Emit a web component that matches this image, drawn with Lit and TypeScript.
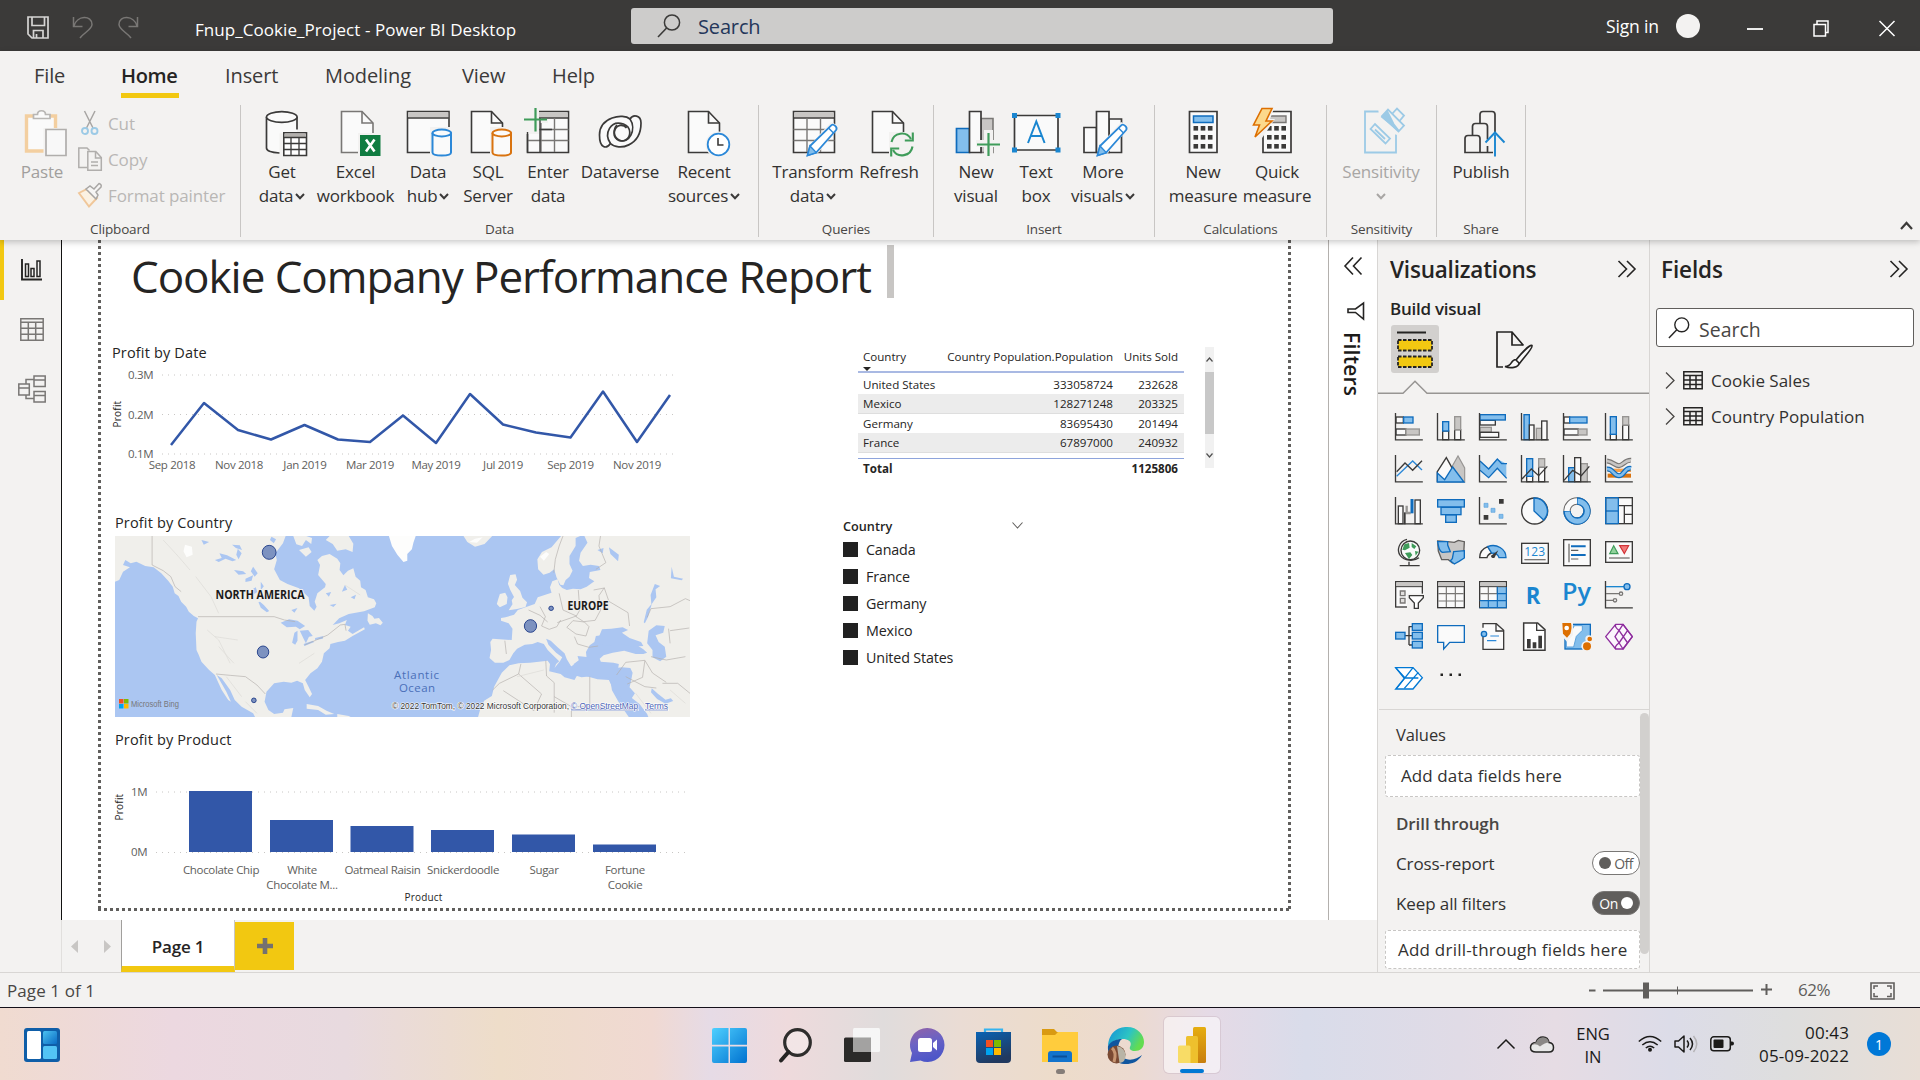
import { LitElement, html, svg, css, TemplateResult, SVGTemplateResult } from "lit";
import { customElement } from "lit/decorators.js";
import { classMap } from "lit/directives/class-map.js";

const base = css`
  * { box-sizing: border-box; }
  :host {
    display: block;
    font-family: "Open Sans", "Noto Sans", sans-serif;
    color: #252423;
    white-space: nowrap;
  }
  svg { display: block; overflow: visible; flex: none; fill: none; }
`;

const INK = "#3b3a39";
const GRAY = "#979593";
const BLUE = "#0f6cbd";
const SKY = "#83beec";
const PAPER = "#fafafa";

/* ---------- shared glyphs ---------- */

const chevDown = (c = INK, w = 2) =>
  html`<svg width="10" height="7" viewBox="0 0 10 7"><path d="M1 1l4 4.2L9 1" stroke=${c} stroke-width=${w}/></svg>`;

const magnifier = (w: number, c: string) =>
  html`<svg width=${w} height=${w} viewBox="0 0 24 24"><circle cx="15" cy="8.5" r="7.6" stroke=${c} stroke-width="1.5"/><path d="M9.6 14L1 23" stroke=${c} stroke-width="1.6"/></svg>`;

const dblChevron = (dir: "l" | "r") => html`<svg width="20" height="18" viewBox="0 0 20 18">
  <path d=${dir === "r" ? "M1.5 1l8 8-8 8M10 1l8 8-8 8" : "M10 0.5L2 9l8 8.5M18.500.5L10.500 9l8 8.500"} stroke="#252423" stroke-width="1.6"/></svg>`;

const page = (x: number) =>
  svg`<path d="M${x} 3.500h20l11 11.500v29.500h-31z" fill=${PAPER} stroke=${INK} stroke-width="1.600"/>
      <path d="M${x + 20} 3.500v11.500h11" stroke=${INK} stroke-width="1.600"/>`;

const cylinder = (c: string) =>
  svg`<path d="M26 19h24v31h-24z" fill="#f3f2f1"/>
      <path d="M28.500 25v19.500c0 4 18.500 4 18.500 0v-19.500" fill=${PAPER} stroke=${c} stroke-width="2"/>
      <ellipse cx="37.800" cy="25" rx="9.300" ry="3.400" fill=${PAPER} stroke=${c} stroke-width="2"/>`;

const table = (x: number) =>
  svg`<path d="M${x} 3.500h41v41h-41z" fill=${PAPER} stroke=${INK} stroke-width="1.600"/>
      <path d="M${x + 1} 4.500h39v5h-39z" fill="#c8c6c4"/>
      <path d="M${x} 10h41" stroke=${INK} stroke-width="1.400"/>
      <path d="M${x} 21.500h41M${x} 32.500h41M${x + 13.5} 10v34M${x + 27} 10v34" stroke="#797775" stroke-width="1.400"/>`;

const pencil = (dx: number) =>
  svg`<g transform="translate(${dx} 0)">
      <path d="M18 49l4-13L42 14l6 3v5L29 45z" fill="#f3f2f1"/>
      <path d="M18.500 47.500l2.500-9.500L42.500 17.200c1.800-1.700 6.500 2 4.600 4.800L27 44.800z" fill="#fff" stroke="#2b88d8" stroke-width="1.800"/>
      <path d="M18.500 47.500l2.500-9.500 6.300 6.600z" fill=${SKY} stroke="#2b88d8" stroke-width="1.400"/>
      <path d="M39.500 20l5 5" stroke="#2b88d8" stroke-width="1.400"/></g>`;

const keys = (x: number) =>
  [0, 1, 2].map((r) => [0, 1, 2].map((c) => svg`<rect x=${x + c * 7.2} y=${18 + r * 9} width="4.600" height="4.600" fill=${INK}/>`));

const ribbonArt: Record<string, SVGTemplateResult> = {
  get: svg`<path d="M8.500 9v31c0 3 6 4.800 13 5.200v-20h17.500v-16" fill=${PAPER}/>
    <path d="M8.500 9v31c0 2.800 5.500 4.500 13 5M39 9v12.500" stroke=${INK} stroke-width="1.700"/>
    <ellipse cx="23.800" cy="9" rx="15.300" ry="5.300" fill=${PAPER} stroke=${INK} stroke-width="1.700"/>
    <path d="M25.800 24.800h22.700v22.700h-22.700z" fill="#fff" stroke=${INK} stroke-width="1.600"/><path d="M26.600 25.600h21v3.500h-21z" fill="#b3b0ad"/>
    <path d="M26 29.500h22.500M26 35.500h22.500M26 41.500h22.500M33 29.500v18M41 29.500v18" stroke=${INK} stroke-width="1.300"/>`,
  excel: svg`<path d="M9.500 3.500h20.500l11 11.500v29.500h-31.500z" fill=${PAPER} stroke="#797775" stroke-width="1.600"/><path d="M30 3.500v11.500h11" stroke="#797775" stroke-width="1.600"/>
    <path d="M26 25h24v25h-24z" fill="#f3f2f1"/><path d="M28 27h20.500v21h-20.500z" fill="#107c41"/><path d="M34 31.500l8.500 12M42.500 31.500l-8.500 12" stroke="#fff" stroke-width="2.600"/>`,
  hub: svg`<path d="M3.500 3.500h41.500v41h-41.500z" fill=${PAPER} stroke=${INK} stroke-width="1.600"/><path d="M4.300 4.300h40v5h-40z" fill="#c8c6c4"/><path d="M3.500 10h41" stroke=${INK} stroke-width="1.400"/>${cylinder("#2b88d8")}`,
  sql: svg`${page(7.5)}${cylinder("#d9730f")}`,
  enter: svg`${table(3.5)}<path d="M-1 -2h16v13h9v4h-9v11h-16z" fill="#f3f2f1"/><path d="M3.500 24v20.500M16 21.500h12M16 10v34" stroke=${INK} stroke-width="1.400"/><path d="M0 11.500h23M11.500 0v23.500" stroke="#3f9c5a" stroke-width="2.200"/>`,
  dataverse: svg`<g stroke=${INK} stroke-width="1.700"><path d="M45 15c0-8-8-9-11-4C27 5 3.500 9 3.500 27c0 14 7 14 11 8.500 8 8 30.500 2.500 30.500-20.500z" fill=${PAPER}/>
    <path d="M14.500 35.500c-7-10 0-24 13-19.500 8 3 8 13 2 16-6 3-13-2-11-9s9-7 12-3"/><path d="M34 11c7 10-1 26-11 21-6-3-6-11-2-15"/></g>`,
  recent: svg`${page(8.5)}<circle cx="38.500" cy="36.500" r="13" fill="#f3f2f1"/><circle cx="38.500" cy="36.500" r="10.800" fill="#fff" stroke="#2b88d8" stroke-width="1.800"/><path d="M38 30v7h5.500" stroke=${INK} stroke-width="1.600"/>`,
  transform: svg`${table(4.5)}${pencil(0)}`,
  refresh: svg`${page(7.5)}<path d="M24 24h26v26h-26z" fill="#f3f2f1"/><g stroke="#3f9c5a" stroke-width="2.100"><path d="M26.500 34a10.500 10.500 0 0 1 19.500-3M47.500 38.500a10.500 10.500 0 0 1-19.500 3.500"/><path d="M47.800 24.500v8h-8M26.200 48.500v-8h8"/></g>`,
  visual: svg`<path d="M4.500 20.500h13v24h-13z" fill=${SKY} stroke=${BLUE} stroke-width="1.700"/><path d="M29 10.500h12v34h-12z" fill="#c8c6c4" stroke="#797775" stroke-width="1.600"/><path d="M17.500 3.500h11.500v41h-11.500z" fill=${PAPER} stroke=${INK} stroke-width="1.700"/>
    <path d="M32 22h9v10h8v7h-8v11h-9v-11h-8v-7h8z" fill="#f3f2f1"/><path d="M25 36.500h23M36.500 25v23" stroke="#3f9c5a" stroke-width="2.200"/>`,
  textbox: svg`<path d="M2.500 7.500h43.500v34.500h-43.500z" fill=${PAPER} stroke=${INK} stroke-width="1.700"/><path d="M0 5h5v5h-5zM43.500 5h5v5h-5zM0 39.500h5v5h-5zM43.500 39.500h5v5h-5z" fill="#1a86d0"/>
    <path d="M16 35l8.300-21.500 8.300 21.500M18.500 28h11.500" stroke="#1a86d0" stroke-width="2"/>`,
  more: svg`<path d="M5 19.500h12.500v25h-12.500z" fill=${PAPER} stroke=${INK} stroke-width="1.700"/><path d="M30 11h12.500v33.500h-12.500z" fill=${PAPER} stroke=${INK} stroke-width="1.700"/><path d="M17.500 3.500h12.500v41h-12.500z" fill=${PAPER} stroke=${INK} stroke-width="1.700"/>${pencil(0)}`,
  measure: svg`<path d="M10.500 3.500h27.500v41h-27.500z" fill=${PAPER} stroke=${INK} stroke-width="1.700"/><path d="M14.500 8h19.500v6.500h-19.500z" fill=${SKY} stroke=${BLUE} stroke-width="1.500"/>${keys(14.5)}`,
  quick: svg`<path d="M10 3.500h28v41h-28z" fill=${PAPER} stroke=${INK} stroke-width="1.700"/><path d="M16 8h17v6.500h-17z" fill="#c8c6c4" stroke="#797775" stroke-width="1.400"/>${keys(14)}
    <path d="M4-2h18l-5 13h5l-13 19-10-2z" fill="#f3f2f1"/><path d="M9 .5h10l-6 12.500h6L2 29l4.500-12h-6z" fill="#fcd98c" stroke="#dd6f00" stroke-width="1.600"/>`,
  sensitivity: svg`<g stroke="#9ccae6" stroke-width="1.800"><path d="M8 3.500h31v41h-31z"/><path d="M21-2l26 6 2 18-10 5-17-18z" fill="#f3f2f1" stroke="none"/>
    <path d="M13.500 21l4.500-5 15 14.500-4.500 5z M18 21.500l10 9.500"/><path d="M25 8l6-6.500 16 16-5.500 6z"/><path d="M25 9l5.500-5 6 12 5 6.500z" fill="#9ccae6"/><path d="M35 6l5-5.500 7 7-4.500 5.500"/></g>`,
  publish: svg`<g stroke=${INK} stroke-width="1.700"><path d="M23 15v-8.500q0-3 3-3h9q3 0 3 3v18M38 44.500" /><path d="M15.500 27v-8.500q0-3 3-3h9q3 0 3 3v13M30.500 38v6.500"/><path d="M8 30.500q0-3 3-3h9q3 0 3 3v14h-15zM23 44.500h13" /></g><path d="M38 48.500v-22M28.500 34.500l9.500-10 9.500 10" stroke="#1a86d0" stroke-width="1.900"/>`,
  paste: svg`<path d="M8.500 8h29v35h-29z" fill="#fafafa" stroke="#f3cfa0" stroke-width="3.400"/><path d="M15.500 10.500v-4h4c0-5 8-5 8 0h4.500v4z" fill="#fafafa" stroke="#b8b6b4" stroke-width="1.700"/><path d="M25.500 20h24v29h-24z" fill="#f3f2f1"/><path d="M28 21.500h20v26h-20z" fill="#f8f8f8" stroke="#b0aeac" stroke-width="1.700"/>`,
};

/* ---------- title bar ---------- */

@customElement("pbi-titlebar")
class TitleBar extends LitElement {
  static styles = [base, css`
    .bar { height: 51px; background: #3b3a39; display: flex; align-items: center; color: #fff; }
    .tools { display: flex; gap: 23px; padding-left: 27px; width: 195px; margin-top: 3px; }
    .name { font-size: 17px; letter-spacing: 0.06px; width: 436px; padding-top: 7px; }
    .search { width: 702px; height: 36px; border-radius: 3px; background: #cdcccb; display: flex; align-items: center; padding-left: 26px; gap: 17px; color: #24375a; font-size: 20px; letter-spacing: -0.15px; }
    .search span { padding-top: 2px; }
    .sign { margin-left: 273px; width: 70px; font-size: 17.500px; letter-spacing: -0.15px; padding-top: 1px; }
    .face { width: 24px; height: 24px; border-radius: 50%; background: #f3f2f1; }
    .ctl { display: flex; gap: 50px; margin-left: 47px; padding-top: 5px; }
  `];
  render() {
    return html`<div class="bar">
      <div class="tools">
        <svg width="22" height="23" viewBox="0 0 22 23"><path d="M1 1h20v21H5l-4-4zM5 1v8.500h12.500V1M6.500 22v-7.500h9.500V22M9.500 22v-4" stroke="#d6d5d4" stroke-width="1.700"/></svg>
        <svg width="22" height="23" viewBox="0 0 22 23"><path d="M1.500 1v9.500h9M2 10C5-1 20-1 20 8.500c0 5-8 8-12 13.500" stroke="#797775" stroke-width="1.500"/></svg>
        <svg width="22" height="23" viewBox="0 0 22 23"><path d="M20.500 1v9.500h-9M20 10C17-1 2-1 2 8.500c0 5 8 8 12 13.500" stroke="#797775" stroke-width="1.500"/></svg>
      </div>
      <div class="name">Fnup_Cookie_Project - Power BI Desktop</div>
      <div class="search">${magnifier(24, "#3b3a39")}<span>Search</span></div>
      <div class="sign">Sign in</div><div class="face"></div>
      <div class="ctl">
        <svg width="16" height="17"><path d="M0 9h16" stroke="#fff" stroke-width="1.800"/></svg>
        <svg width="16" height="17"><path d="M1 4.500h11.500v11.500H1zM4 4V1h11v11.500h-2.500" stroke="#fff" stroke-width="1.500"/></svg>
        <svg width="16" height="17"><path d="M.5 1l15 15M15.500 1l-15 15" stroke="#fff" stroke-width="1.500"/></svg>
      </div>
    </div>`;
  }
}

/* ---------- ribbon ---------- */

type Btn = { icon: string; l1: string; l2?: string; menu?: boolean; w: number; off?: boolean };
type Group = { name: string; w: number; pad: number; items: Btn[] };
const groups: Group[] = [
  { name: "Data", w: 518, pad: 6, items: [
    { icon: "get", l1: "Get", l2: "data", menu: true, w: 70 },
    { icon: "excel", l1: "Excel", l2: "workbook", w: 77 },
    { icon: "hub", l1: "Data", l2: "hub", menu: true, w: 68 },
    { icon: "sql", l1: "SQL", l2: "Server", w: 52 },
    { icon: "enter", l1: "Enter", l2: "data", w: 68 },
    { icon: "dataverse", l1: "Dataverse", w: 76 },
    { icon: "recent", l1: "Recent", l2: "sources", menu: true, w: 92 },
  ] },
  { name: "Queries", w: 175, pad: 14, items: [
    { icon: "transform", l1: "Transform", l2: "data", menu: true, w: 80 },
    { icon: "refresh", l1: "Refresh", w: 72 },
  ] },
  { name: "Insert", w: 221, pad: 12, items: [
    { icon: "visual", l1: "New", l2: "visual", w: 60 },
    { icon: "textbox", l1: "Text", l2: "box", w: 60 },
    { icon: "more", l1: "More", l2: "visuals", menu: true, w: 74 },
  ] },
  { name: "Calculations", w: 172, pad: 11, items: [
    { icon: "measure", l1: "New", l2: "measure", w: 74 },
    { icon: "quick", l1: "Quick", l2: "measure", w: 74 },
  ] },
  { name: "Sensitivity", w: 110, pad: 12, items: [{ icon: "sensitivity", l1: "Sensitivity", l2: "", menu: true, w: 84, off: true }] },
  { name: "Share", w: 89, pad: 12, items: [{ icon: "publish", l1: "Publish", w: 64 }] },
];

@customElement("pbi-ribbon")
class Ribbon extends LitElement {
  static styles = [base, css`
    :host { height: 189px; background: #f3f2f1; box-shadow: 0 2px 6px rgba(0,0,0,.22); position: relative; z-index: 2; }
    .tabs { display: flex; height: 54px; padding-left: 34px; font-size: 20px; letter-spacing: -0.1px; color: #3b3a39; }
    .tab { padding-top: 11px; line-height: 27px; height: 47px; }
    .active { font-weight: 600; color: #252423; border-bottom: 5px solid #f2c811; letter-spacing: -0.35px; }
    .t0 { width: 87px; } .t1 { width: 58px; margin-right: 46px; } .t2 { width: 100px; } .t3 { width: 137px; } .t4 { width: 90px; }
    .body { display: flex; height: 133px; }
    .group { display: flex; flex-direction: column; border-right: 1px solid #c8c6c4; height: 132px; }
    .items { display: flex; }
    .gname { margin-top: auto; text-align: center; font-size: 13.500px; line-height: 16px; letter-spacing: -0.15px; color: #484644; }
    .btn { display: flex; flex-direction: column; align-items: center; padding-top: 3px; font-size: 17px; line-height: 24px; letter-spacing: -0.18px; color: #323130; }
    .lbl { display: flex; align-items: center; gap: 2px; height: 24px; }
    .l1 { margin-top: 4px; }
    .btn.off { color: #a8a6a4; }
    .clip { width: 241px; }
    .cliprow { display: flex; }
    .btn.paste { width: 84px; color: #a19f9d; }
    .mini { display: flex; flex-direction: column; margin-left: -6px; }
    .row { height: 36px; display: flex; align-items: center; gap: 6px; color: #b9b7b5; font-size: 17px; letter-spacing: -0.1px; }
    .caret { margin-left: auto; align-self: flex-end; padding: 0 7px 8px 0; }
  `];
  private btn(b: Btn): TemplateResult {
    return html`<div class=${classMap({ btn: true, off: !!b.off })} style="width:${b.w}px">
      <svg width="48" height="48" viewBox="0 0 48 48">${ribbonArt[b.icon]}</svg>
      <div class="lbl l1">${b.l1}</div>
      ${b.l2 !== undefined ? html`<div class="lbl">${b.l2 ? html`<span>${b.l2}</span>` : ""}${b.menu ? chevDown(b.off ? "#a8a6a4" : INK) : ""}</div>` : ""}
    </div>`;
  }
  render() {
    return html`
      <div class="tabs">
        <div class="tab t0">File</div><div class="tab t1 active">Home</div><div class="tab t2">Insert</div>
        <div class="tab t3">Modeling</div><div class="tab t4">View</div><div class="tab">Help</div>
      </div>
      <div class="body">
        <div class="group clip">
          <div class="cliprow">
            <div class="btn paste"><svg width="48" height="48" viewBox="0 0 48 48">${ribbonArt.paste}</svg><div class="lbl l1">Paste</div></div>
            <div class="mini">
              <div class="row"><svg width="24" height="24"><path d="M6.500 0l8.500 17M17 0L8.500 17" stroke="#a8a6a4" stroke-width="1.500"/><circle cx="7" cy="20" r="3" stroke="#9ccae6" stroke-width="1.900"/><circle cx="16.500" cy="20" r="3" stroke="#9ccae6" stroke-width="1.900"/></svg>Cut</div>
              <div class="row"><svg width="24" height="24"><path d="M9 20.500H.8V1H9l2.500 2.500" stroke="#b0aeac" stroke-width="1.500"/><path d="M9.800 4.500h8l5.500 6v12.700H9.800zM17.500 4.500v6.500h6M13 15h7M13 18.500h7" stroke="#b0aeac" stroke-width="1.500"/></svg>Copy</div>
              <div class="row"><svg width="24" height="24"><path d="M1 10l8-4 10 9-8 8.500z" fill="#fbf1e2" stroke="#f0c79a" stroke-width="1.900"/><path d="M8 6l4-3 4 3 5-5.500q3 1 2 3.500l-5 5 2 3-2 4z" fill="#f6f5f4" stroke="#a8a6a4" stroke-width="1.500"/></svg>Format painter</div>
            </div>
          </div>
          <div class="gname">Clipboard</div>
        </div>
        ${groups.map((g) => html`<div class="group" style="width:${g.w}px">
          <div class="items" style="padding-left:${g.pad}px">${g.items.map((b) => this.btn(b))}</div>
          <div class="gname">${g.name}</div>
        </div>`)}
        <div class="caret"><svg width="13" height="9"><path d="M1 8l5.500-6L12 8" stroke=${INK} stroke-width="2.200"/></svg></div>
      </div>`;
  }
}

/* ---------- left navigation ---------- */

@customElement("pbi-nav")
class Nav extends LitElement {
  static styles = [base, css`
    :host { width: 62px; background: #f3f2f1; display: flex; flex-direction: column; }
    .line { border-right: 1.500px solid #111; height: 680px; display: flex; flex-direction: column; }
    .foot { flex: 1; border-right: 1px solid #e1dfdd; }
    .item { height: 58px; display: flex; align-items: center; padding-left: 20px; }
    .on { height: 60px; border-left: 4px solid #f2c811; padding: 0 0 1px 17px; }
    .third { height: 62px; padding-left: 18px; }
  `];
  render() {
    return html`<div class="line">
      <div class="item on"><svg width="21" height="22"><path d="M1 0v20.500h20" stroke="#252423" stroke-width="1.900"/><path d="M4.500 5h3v12.500h-3zM10 9.500h3v8h-3zM16 2h3v15.500h-3z" stroke="#252423" stroke-width="1.500"/></svg></div>
      <div class="item"><svg width="24" height="23"><path d="M.8.8h22.400v21.400H.8zM.8 4.300h22.400M.8 10.300h22.400M.8 16.300h22.400M8.300 4.300v18M15.700 4.300v18" stroke="#797775" stroke-width="1.500"/></svg></div>
      <div class="item third"><svg width="28" height="28"><path d="M.8 9h10.500v11H.8zM.8 13h10.500M16 1h11.200v10.500H16zM16 5h11.200M16 16.500h11.200V27H16zM16 20.500h11.200M8 9V4.500h8M8 20v3.500h8" stroke="#797775" stroke-width="1.500"/></svg></div>
    </div><div class="foot"></div>`;
  }
}

/* ---------- report page ---------- */

const profit: [number, number][] = [[171, 445], [204, 403], [238, 430], [271, 439.5], [304.5, 425], [338, 439.5], [370, 442], [403, 415.5], [436, 443], [470, 394], [503, 424.5], [536, 432.5], [570.5, 437.5], [603, 391.5], [637, 442], [670, 395]];
const months: [string, number][] = [["Sep 2018", 172], ["Nov 2018", 239], ["Jan 2019", 305], ["Mar 2019", 370], ["May 2019", 436], ["Jul 2019", 503], ["Sep 2019", 570.5], ["Nov 2019", 637]];
const products: { x: number; top: number; l: string[] }[] = [
  { x: 189, top: 791, l: ["Chocolate Chip"] },
  { x: 270, top: 820, l: ["White", "Chocolate M..."] },
  { x: 350.5, top: 826, l: ["Oatmeal Raisin"] },
  { x: 431, top: 830, l: ["Snickerdoodle"] },
  { x: 512, top: 834.5, l: ["Sugar"] },
  { x: 593, top: 844.5, l: ["Fortune", "Cookie"] },
];
const sales = [["United States", "333058724", "232628"], ["Mexico", "128271248", "203325"], ["Germany", "83695430", "201494"], ["France", "67897000", "240932"]];
const countries = ["Canada", "France", "Germany", "Mexico", "United States"];
const bubbles = [[442, 127, 18, 21], [426, 426, 15, 18], [402, 571, 6, 7], [1125, 348, 16, 19], [1179, 295, 6, 6.5]];

const mapArt = svg`
  <rect x="39" y="78" width="1503" height="543" fill="#abc6f2"/>
  <g fill="#f0efeb">
    <path d="M39 78H485L478 100 470 112 458 130 462 150 455 178 470 210 490 222 520 235 545 262 548 288 560 302 566 290 561 275 568 250 588 232 590 222 570 195 575 165 568 150 580 138 600 132 620 146 628 160 626 180 636 196 648 182 662 175 668 200 680 212 682 232 694 240 700 262 716 268 722 280 718 292 690 304 650 312 625 325 608 345 625 340 645 330 640 345 655 350 648 362 660 372 690 352 692 358 660 378 640 392 622 396 602 402 600 415 585 430 580 455 568 475 550 490 536 510 545 530 554 552 548 562 535 540 530 520 515 512 500 518 480 515 455 520 435 545 430 575 440 600 455 612 478 608 482 598 505 594 500 621H405L400 610 370 590 352 570 340 540 318 505 305 495 315 515 330 545 342 575 335 570 318 540 308 515 300 495 285 480 265 455 258 435 252 420 250 370 252 335 256 325 245 318 232 305 225 290 212 275 205 258 195 250 190 230 178 212 160 190 140 172 118 168 95 155 80 160 66 150 60 165 78 172 60 185 50 210 39 215z"/>
    <path d="M700 310l12 8 5 8 12-2 10 14-6 8-12-6-16 4-6-12zM505 78l8 25 15 5 10-18 14 12 2-18-15-6zM600 78l-10 12 18 12 12 20 22-4 18 8 2-25-12-23zM520 120l25-8 8 14-15 14zM540 582l30 6 22 14 20 10-22 2-20-14-30-4zM620 612l30 6 5 3h-35z"/>
    <path d="M950 78l10 18 20 14 25-8 20-24z"/><path d="M1072 195l14-2 4 16-6 16 14 18 6 20 12 14-4 14-22 6-22 4 10-18-2-12 6-10-10-22-6-18zM1045 252l14-4 6 14-2 20-18 10-8-10 4-16z"/>
    <path d="M1205 78l-15 20-10 14-25 14-12 22 2 30 14 16 16-6 12-10 6 24 10 22 8 2 6-16 10-10 8-18-8-20 0-24 16-30 0-24 12-6z"/>
    <path d="M1266 78l8 20-18 30-4 24 10 16 20-4 22 4 4 12-28 6-2 18 14 10-20 16-16 8-20-2-16 4-12-6-8-10-4-16-14 6-6 18 4 16-16 6-20 8-8 20-24 10-20 8-10 14-22 8-12 2 0 8 20 8 10 16-2 34-50-4-6 10 2 24-4 24 14 14 22 0 16-8 10-20 10-14 20-12 20-2 14-6 16 6 10 18 18 20 12 14-8 8-4 12 14-20 6-12-16-14-20-24-6-18 12 6 18 20 18 18 6 18 12 22-6 16 14-2-2-22 14-12 20-4-2-20 10-20 12-10 4-18 24-4 18 8-14 8 18 12 26-10-6-10 18 6 40 30 10 10-10 4-20 0-30-10-30 6-24 8-10 10 6 20 22 10 30-4 22 2 6 14-4 24-4 20 14 18-8 14 20 18 20 30 12 35h170V78z"/>
    <path d="M1050 488l20-22 24-6 30-2 46-6 6 10-2 22 30 8 10 10 26 8 6-12 24 0 30 10 30 2 16 40 20 38 18 33H988l6-25 10-24 20-14 6-28z"/>
  </g>
  <path d="M755 78l8 30 14 26 16 22 10-4 0-20 12-14 4-20 6-20z" fill="#fdfdfc"/>
  <path d="M222 104l18 6 2 24-16 8-8-18zM1150 140l16-14 8 6-14 20zM965 96l20 2 15-16-20 4z" fill="#fdfdfc"/>
  <g fill="#abc6f2">
    <path d="M472 338l22-10 22 4 20 16-14 10-10-8-24 2zM508 368l8-6 0 30-6 12-8-6zM522 362l22-2 12 18-10 2-8 20-6-14zM532 402l24-10 4 4-26 12zM562 384l22-6-2 8-20 4zM418 275l10 10 14 18-6 4-16-14-6-16zM312 130l20 6 24 14-10 4-18-8-18 10-10-6 18-6zM345 104l20 2 6 14-16-6zM380 206l20-10-4 16-16 4zM400 170l12 20-8 10-10-16zM448 80l12 8-6 12-10-10zM500 300l16-6-8 14zM395 240l12-8 4 14-12 8zM360 116l10 14-8 18-6-14zM350 180l24 4 8 8-20 2zM420 215l8 14-8 12zM590 250l14-4-6 14zM640 225l6 14-14 6zM655 262l14-8-4 14zM265 90l20 6-14 8zM600 285l18-4-8 10z"/>
    <path d="M1434 362l20-16 22 2-4 20-20 8 8 20 16 14 4 30-16 14-20-12 0-22-14-20z"/><path d="M1334 512l10 20 26 44 20 34 4 11h-12l-24-40-20-40zM1442 535l16 16 20 18 14-4 6 8-20 8-22-14-16-20z"/><path d="M1450 222l14 6-12 10 2 24-12 20-10 40-8 18-3-3 8-38 12-16-2-28zM1330 112l26 22-2 20-20-22zM1494 170l6 30 24 6-4 5-28-6zM1300 120l16-6-2 16z"/>
    <path d="M1312 358l24-2 30-4 14 8-16 8 20 16 30 12 6 12-30 2-30-8-34 6-18-6-4-22z"/><path d="M1200 462l30 8 22-16-4-16 30 4 14 12 50 4 14 4-4 30-16 12-44-6-34 4-52-18z"/>
  </g>
  <g fill="none" stroke="#b3adab" stroke-width="1.800">
    <path d="M136 78V165L165 182 185 200 196 230 212 245M256 320H455L482 330 510 335M535 405L565 390 595 375 628 345 640 343 643 362M303 492L340 496 380 500 410 525 432 552"/>
    <path d="M1210 78l-10 30-10 40-4 40M1200 250l10 50 35 18-50 20M1150 290l14 30-10 28 20 10 20-8 10-20M1250 240l4 60-10 20 20 15 30-4 14-30-4-44 14-24M1290 240l28-6 12 40 50 34 4 40M1220 352l16-20 30 4 12 14-8 28-26-6-24-20M1240 380l8 22 30 10 24-4M1120 300l30 16 20 20M1058 392l4 40M1308 78l-4 30 18 50-26 20M1430 322l10-26 50-6 40-24 12 6M1490 362l50-8M1490 400l-4-44M1440 440l40 10 50-10"/>
    <path d="M1165 452l2 46 20 20 0 90M1100 462l-6 30-50 28-18 20M1094 492l60 60-20 50-80-60M1280 500v90h80M1187 560l45 30 48 0M1232 590v31M1350 495l24-38 50-6 20 38 36 28M1374 500l50 30 30 4M1424 452l-6 50-40 20M1470 520l40 0 32 30"/>
  </g>
  <g fill="none" stroke="#dedcd8" stroke-width="2"><path d="M165 90l40 50 30 40M250 200l40 60 20 50M280 360l30 30 30 70M300 380l60 10M310 410l40 50M640 225l40 30M560 430l-40 30M380 575l30 35M330 500l40 60M1490 540l40 40M1090 500l70-20M1400 550l40 60"/></g>`;

@customElement("pbi-report")
class Report extends LitElement {
  static styles = [base, css`
    :host { width: 1266px; background: #fff; padding-left: 36px; }
    .sheet {
      width: 1193px; height: 671px; display: flex; flex-direction: column; overflow: hidden;
      background:
        repeating-linear-gradient(180deg, #605e5c 0 3px, transparent 3px 6px) 0 0 / 3px 100% no-repeat,
        repeating-linear-gradient(180deg, #605e5c 0 3px, transparent 3px 6px) 100% 0 / 3px 100% no-repeat,
        repeating-linear-gradient(90deg, #605e5c 0 3px, transparent 3px 6px) 0 100% / 100% 3px no-repeat;
    }
    .head { display: flex; height: 95px; padding-left: 33px; }
    h1 { margin: 0; font-weight: 400; font-size: 44px; line-height: 60px; padding-top: 6px; width: 756px; letter-spacing: -1.05px; }
    .cur { width: 7px; height: 53px; margin-top: 5px; background: #c8c6c4; }
    .cols { display: flex; }
    .left { width: 737px; padding-left: 14px; }
    .vt { font-size: 14.500px; line-height: 20px; height: 20px; letter-spacing: 0.15px; }
    .v1 { padding-top: 8px; height: 178px; } .v2 { height: 217px; padding-left: 3px; } .v3 { padding-left: 3px; }
    .map { margin-top: 3px; overflow: hidden; }
    text { font-size: 11.500px; fill: #605e5c; letter-spacing: -0.32px; }
    .ax { font-size: 10px; fill: #252423; letter-spacing: 0.2px; }
    .mid { text-anchor: middle; }
    .cont { font-size: 11.500px; font-weight: 700; fill: #1b1a19; stroke: #f0efeb; stroke-width: 2px; paint-order: stroke; letter-spacing: 0; }
    .sea { font-size: 11.500px; fill: #4a6fb8; letter-spacing: 0; }
    .cr { font-family: "Liberation Sans", Arial, sans-serif; font-size: 8.200px; fill: #333; stroke: #fff; stroke-width: 1.200px; paint-order: stroke; letter-spacing: 0; }
    .lk { fill: #4a63b5; text-decoration: underline; }
    .bing { font-family: "Liberation Sans", Arial, sans-serif; font-size: 9px; fill: #77777a; letter-spacing: 0; }
    .right { padding-top: 12px; padding-left: 7px; }
    .tblwrap { display: flex; gap: 21px; padding-left: 16px; font-size: 11.600px; }
    .grid { width: 326px; }
    .tr { display: grid; grid-template-columns: 90px 165px 65px; height: 19.500px; line-height: 19px; }
    .tr > :not(:first-child) { text-align: right; direction: ltr; display: flex; justify-content: flex-end; }
    .tr > :first-child { padding-left: 5px; }
    .th { height: 26px; line-height: 19px; border-bottom: 2px solid #a9b9e3; letter-spacing: -0.03px; }
    .first { display: flex; flex-direction: column; gap: 1px; }
    .alt { background: #ececec; border-bottom: 1px solid #dedede; }
    .tot { font-weight: 700; border-top: 1.500px solid #8ea4dc; margin-top: 5px; letter-spacing: 0; }
    .rows { padding-top: 1.500px; }
    .sb { width: 9px; height: 121px; background: #f1f1f1; display: flex; flex-direction: column; align-items: center; justify-content: space-between; padding: 10px 0; }
    .th2 { width: 9px; height: 62px; background: #c8c8c8; margin-top: 10px; margin-bottom: auto; }
    .slicer { margin-top: 38.500px; padding-left: 1px; }
    .sh { display: flex; align-items: center; justify-content: space-between; width: 180px; font-size: 12.700px; font-weight: 600; height: 20px; }
    .opt { display: flex; align-items: center; gap: 8px; height: 27px; font-size: 14.300px; letter-spacing: -0.15px; }
    .box { width: 15px; height: 15px; background: #212121; }
  `];
  render() {
    return html`<div class="sheet">
      <div class="head"><h1>Cookie Company Performance Report</h1><div class="cur"></div></div>
      <div class="cols">
        <div class="left">
          <div class="v1"><div class="vt">Profit by Date</div>
            <svg width="575" height="117" viewBox="112 363 575 117">
              ${[375, 414.5, 454].map((y) => svg`<path d="M162 ${y}H676" stroke="#c8c6c4" stroke-width="1" stroke-dasharray="1 5"/>`)}
              <text x="128" y="379">0.3M</text><text x="128" y="418.500">0.2M</text><text x="128" y="458">0.1M</text>
              <text class="ax mid" transform="translate(120.500 414) rotate(-90)">Profit</text>
              <polyline points=${profit.map((p) => p.join()).join(" ")} stroke="#3257a8" stroke-width="2.500" stroke-linejoin="round"/>
              ${months.map(([m, x]) => svg`<text class="mid" x=${x} y="469">${m}</text>`)}
            </svg></div>
          <div class="v2"><div class="vt">Profit by Country</div>
            <svg class="map" width="575" height="181" viewBox="0 0 575 181">
              <svg width="575" height="181" viewBox="39 78 1503 543" preserveAspectRatio="none">${mapArt}
                ${bubbles.map(([x, y, rx, ry]) => svg`<ellipse cx=${x} cy=${y} rx=${rx} ry=${ry} fill="#3f5fa9" fill-opacity=".65" stroke="#1d3a86" stroke-width="2.500"/>`)}</svg>
              <text class="cont" x="100.500" y="63" textLength="89" lengthAdjust="spacingAndGlyphs">NORTH AMERICA</text><text class="cont" x="452.500" y="74" textLength="41" lengthAdjust="spacingAndGlyphs">EUROPE</text>
              <text class="sea" x="279" y="143" textLength="45">Atlantic</text><text class="sea" x="284" y="155.500" textLength="36">Ocean</text>
              <path d="M4 163h4.500v4.500H4z" fill="#f25022"/><path d="M9 163h4.500v4.500H9z" fill="#7fba00"/><path d="M4 168h4.500v4.500H4z" fill="#00a4ef"/><path d="M9 168h4.500v4.500H9z" fill="#ffb900"/>
              <text class="bing" x="16" y="171" textLength="48" lengthAdjust="spacingAndGlyphs">Microsoft Bing</text>
              <text class="cr" x="277" y="172.500" textLength="177" lengthAdjust="spacingAndGlyphs">© 2022 TomTom, © 2022 Microsoft Corporation,</text>
              <text class="cr lk" x="456" y="172.500" textLength="67" lengthAdjust="spacingAndGlyphs">© OpenStreetMap</text><text class="cr lk" x="530" y="172.500" textLength="23" lengthAdjust="spacingAndGlyphs">Terms</text>
            </svg></div>
          <div class="v3"><div class="vt">Profit by Product</div>
            <svg width="575" height="155" viewBox="115 750 575 155">
              <path d="M156 792H686M156 852.500H686" stroke="#c8c6c4" stroke-dasharray="1 5"/>
              <text x="131" y="796">1M</text><text x="131" y="856">0M</text>
              <text class="ax mid" transform="translate(123 807) rotate(-90)">Profit</text>
              ${products.map((p) => svg`<rect x=${p.x} y=${p.top} width="63" height=${852 - p.top} fill="#3257a8"/>
                ${p.l.map((t, i) => svg`<text class="mid" x=${p.x + 32} y=${874 + i * 15}>${t}</text>`)}`)}
              <text class="ax mid" x="423.500" y="901">Product</text>
            </svg></div>
        </div>
        <div class="right">
          <div class="tblwrap">
            <div class="grid">
              <div class="tr th"><span class="first"><span>Country</span><svg width="8" height="4"><path d="M0 0h8L4 4z" fill="#252423"/></svg></span><span>Country Population.Population</span><span>Units Sold</span></div>
              <div class="rows">${sales.map((r, i) => html`<div class=${classMap({ tr: true, alt: i % 2 === 1 })}>${r.map((c) => html`<span>${c}</span>`)}</div>`)}</div>
              <div class="tr tot"><span>Total</span><span></span><span>1125806</span></div>
            </div>
            <div class="sb"><svg width="7" height="5"><path d="M.5 4.500l3-3.500 3 3.500" stroke="#505050" stroke-width="1.200"/></svg><div class="th2"></div><svg width="7" height="5"><path d="M.5.5l3 3.500 3-3.500" stroke="#505050" stroke-width="1.200"/></svg></div>
          </div>
          <div class="slicer">
            <div class="sh"><span>Country</span><svg width="11" height="7"><path d="M.5.5l5 5.500 5-5.500" stroke="#605e5c" stroke-width="1.100"/></svg></div>
            <div class="opts">${countries.map((c) => html`<div class="opt"><div class="box"></div>${c}</div>`)}</div>
          </div>
        </div>
      </div>
    </div>`;
  }
}

@customElement("pbi-pagetabs")
class PageTabs extends LitElement {
  static styles = [base, css`
    :host { height: 52px; background: #f3f2f1; display: flex; width: 1315px; }
    .arrows { width: 59px; display: flex; align-items: center; gap: 26px; padding-left: 9px; }
    .tab { width: 114px; background: #fff; border-left: 1px solid #a19f9d; border-right: 1px solid #c8c6c4; border-bottom: 6px solid #f2c811; display: flex; align-items: center; justify-content: center; padding-top: 6px; font-size: 17px; font-weight: 600; letter-spacing: -0.2px; }
    .add { width: 59px; height: 48px; margin-top: 2px; background: #f2c811; display: flex; align-items: center; justify-content: center; }
  `];
  render() {
    return html`<div class="arrows"><svg width="7" height="13"><path d="M7 0v13L0 6.500z" fill="#c8c6c4"/></svg><svg width="7" height="13"><path d="M0 0v13l7-6.500z" fill="#c8c6c4"/></svg></div>
      <div class="tab">Page 1</div>
      <div class="add"><svg width="16" height="16"><path d="M0 8h16M8 0v16" stroke="#757170" stroke-width="4.600"/></svg></div>`;
  }
}

/* ---------- filters ---------- */

@customElement("pbi-filters")
class Filters extends LitElement {
  static styles = [base, css`
    :host { width: 49px; background: #fff; border-left: 1px solid #b3b0ad; height: 680px; display: flex; flex-direction: column; align-items: center; padding-top: 17px; }
    .fun { margin: 27px 0 0 6px; }
    .lbl { writing-mode: vertical-rl; font-weight: 600; font-size: 21px; line-height: 24px; margin-top: 12px; margin-right: 2px; letter-spacing: 0.25px; color: #1b1a19; }
  `];
  render() {
    return html`${dblChevron("l")}
      <svg class="fun" width="18" height="18"><path d="M16.500 1v16L8.500 10.500H1V7h7.500z" stroke="#252423" stroke-width="1.600"/></svg>
      <div class="lbl">Filters</div>`;
  }
}

/* ---------- visualizations ---------- */

const axis = svg`<path d="M1.500 0v80.500h82" stroke=${INK} stroke-width="4"/>`;
const R = (x: number, y: number, w: number, h: number, k: "b" | "g" | "w" | "d") =>
  svg`<rect x=${x} y=${y} width=${w} height=${h} fill=${{ b: SKY, g: "#c8c6c4", w: PAPER, d: PAPER }[k]} stroke=${{ b: BLUE, g: GRAY, w: INK, d: "#797775" }[k]} stroke-width="4"/>`;

const gallery: SVGTemplateResult[] = [
  svg`${R(3, 12, 22, 18, "w")}${R(26, 12, 28, 18, "b")}${R(3, 48, 30, 18, "w")}${R(33, 48, 40, 18, "g")}${axis}`,
  svg`${R(17, 54, 18, 26, "w")}${R(17, 26, 18, 28, "b")}${R(53, 50, 18, 30, "w")}${R(53, 11, 18, 39, "g")}${axis}`,
  svg`${R(3, 22, 46, 14, "w")}${R(3, 5, 76, 16, "b")}${R(3, 43, 34, 14, "g")}${R(3, 58, 56, 15, "w")}${axis}`,
  svg`${R(9, 5, 16, 75, "b")}${R(25, 36, 14, 44, "w")}${R(46, 46, 16, 34, "g")}${R(62, 24, 16, 56, "w")}${axis}`,
  svg`${R(3, 12, 17, 18, "w")}${R(20, 12, 52, 18, "b")}${R(3, 48, 43, 18, "w")}${R(46, 48, 26, 18, "g")}${axis}`,
  svg`${R(16, 64, 18, 16, "w")}${R(16, 11, 18, 53, "b")}${R(53, 36, 18, 44, "w")}${R(53, 11, 18, 25, "g")}${axis}`,
  svg`${axis}<path d="M5 64l48-46 28 27" stroke="#2b88d8" stroke-width="4"/><path d="M5 50l25-26 23 22 28-29" stroke=${INK} stroke-width="4"/>`,
  svg`<path d="M1 50L28 8l40 72H1z" fill=${PAPER} stroke=${INK} stroke-width="4"/><path d="M46 33L63 3l20 36v42H70z" fill="#c8c6c4" stroke=${GRAY} stroke-width="3.500"/><path d="M1 54l22 20 24-38 34 45H1z" fill=${SKY} stroke=${BLUE} stroke-width="4"/>`,
  svg`<path d="M3 18l26 22 26-28 27 14v44L55 40 29 66 3 44z" fill=${SKY}/><path d="M3 18l26 24 26-30 13 14h16M3 46l26 22 26-28 28 30" stroke=${BLUE} stroke-width="4"/>${axis}`,
  svg`${R(17, 64, 18, 16, "w")}${R(17, 11, 18, 53, "b")}${R(53, 36, 18, 44, "w")}${R(53, 11, 18, 25, "g")}${axis}<path d="M3 72l28-30 22 20 26-28" stroke=${INK} stroke-width="4"/>`,
  svg`${R(17, 38, 18, 42, "b")}${R(53, 26, 20, 54, "g")}${R(35, 8, 18, 72, "w")}${axis}<path d="M3 76l26-30 26 16 24-28" stroke=${INK} stroke-width="4"/>`,
  svg`<path d="M8 62h70" stroke="#d9730f" stroke-width="12"/><path d="M8 46h70" stroke="#f7a14b" stroke-width="10"/><path d="M6 18C25 20 30 32 42 32S60 14 78 16" stroke="#797775" stroke-width="15"/><path d="M6 18C25 20 30 32 42 32S60 14 78 16" stroke="#c8c6c4" stroke-width="8"/><path d="M6 42C25 40 25 62 42 62S58 36 78 40" stroke=${BLUE} stroke-width="15"/><path d="M6 42C25 40 25 62 42 62S58 36 78 40" stroke=${SKY} stroke-width="8"/>${axis}`,
  svg`${R(10, 27, 14, 53, "w")}<path d="M35 26v22h12" stroke=${GRAY} stroke-width="7"/><path d="M51 6v43" stroke=${BLUE} stroke-width="9"/>${R(29, 48, 1, 32, "w")}${R(60, 9, 16, 71, "w")}${axis}`,
  svg`${R(2, 8, 80, 22, "b")}${R(12, 31, 60, 22, "b")}${R(26, 54, 32, 22, "b")}`,
  svg`${axis}<g fill="#3b3a39"><path d="M60 6h14v14H60zM14 54h14v14H14z"/></g><g fill=${SKY} stroke="#5ea3dc" stroke-width="2"><path d="M15 19h12v12H15zM36 34h12v12H36zM60 52h12v12H60z"/></g>`,
  svg`<circle cx="41" cy="42" r="39" fill=${PAPER} stroke=${INK} stroke-width="4"/><path d="M39 3A39 39 0 0 1 68 69L39 42z" fill=${SKY} stroke=${BLUE} stroke-width="4"/>`,
  svg`<circle cx="42" cy="42" r="30" stroke=${INK} stroke-width="22" opacity=".75"/><circle cx="42" cy="42" r="30" stroke=${PAPER} stroke-width="16"/><path d="M42 12a30 30 0 1 1-30 30" stroke=${BLUE} stroke-width="22"/><path d="M44 12.500a30 30 0 1 1-31 31.500" stroke=${SKY} stroke-width="15"/>`,
  svg`<rect x="2" y="2" width="80" height="78" fill=${PAPER}/><rect x="2" y="2" width="37" height="78" fill=${SKY}/><path d="M2 42h38" stroke=${BLUE} stroke-width="4"/><path d="M40 26h42M58 26v54M58 52h24" stroke=${INK} stroke-width="4"/><rect x="2" y="2" width="80" height="78" stroke=${INK} stroke-width="4"/><path d="M40 2v78M2 2h38M2 80h38M2 2v78" stroke=${BLUE} stroke-width="4"/>`,
  svg`<circle cx="46" cy="34" r="28" fill=${PAPER} stroke=${INK} stroke-width="4"/><path d="M28 16l14-4 2 14-14 8-8-2zM50 12l14 10-6 8-8-6zM30 42l16-2 6 8-10 12zM60 36l10 2-8 12z" fill="#3f9c5a"/><path d="M36 1C12 6 4 34 16 50s40 18 56 6M42 68v10M14 80h60" stroke=${INK} stroke-width="4"/>`,
  svg`<path d="M2 6l30 2 20 2 12-6 18 4-2 40-14 14-20 10-12-10-20 0-10-26z" fill="#c8c6c4" stroke="#605e5c" stroke-width="4"/><path d="M2 8h30v10l8 20-24 2C2 32 6 22 2 8zM50 38l32-3v22l-16 10-14 8-12-10 6-6z" fill=${SKY} stroke=${BLUE} stroke-width="4"/>`,
  svg`<path d="M2 56a39 36 0 0 1 24-33l12 19q-12 4-14 14z" fill=${PAPER} stroke=${INK} stroke-width="4"/><path d="M26 23a39 36 0 0 1 55 33H60q-4-14-22-14z" fill=${SKY} stroke=${BLUE} stroke-width="4"/><path d="M58 34L36 50q0 8 10 7z" fill=${INK}/>`,
  svg`${R(2, 13, 80, 60, "w")}<text x="10" y="52" font-size="36" font-family="Open Sans" textLength="62" fill="#1a86d0">123</text><path d="M10 62h64" stroke="#797775" stroke-width="4"/>`,
  svg`${R(2, 2, 80, 78, "w")}<path d="M18 14v56M24 34h22M24 60h22" stroke="#605e5c" stroke-width="3.500"/><path d="M24 22h44M24 48h44" stroke=${BLUE} stroke-width="6"/>`,
  svg`${R(2, 8, 80, 62, "w")}<path d="M14 44l12-24 13 24z" fill="#92d39c" stroke="#3f9c5a" stroke-width="3.500"/><path d="M44 20h27L58 44z" fill="#f27a7a" stroke="#d13438" stroke-width="3.500"/><path d="M12 57h62" stroke="#797775" stroke-width="4"/>`,
  svg`${R(2, 2, 80, 76, "w")}<path d="M4 4h76v12H4z" fill="#c8c6c4"/><path d="M2 17h80" stroke=${INK} stroke-width="3"/><path d="M16 30h14v14H16zM16 52h14v14H16z" fill="#e1dfdd" stroke="#797775" stroke-width="4"/><path d="M36 38h50v48H36z" fill="#f3f2f1"/><path d="M43 44h42v6L70 66v16H58V66L43 50z" fill="#fff" stroke=${INK} stroke-width="4"/>`,
  svg`${R(2, 2, 80, 78, "w")}<path d="M4 4h76v12H4z" fill="#c8c6c4"/><path d="M2 17h80" stroke=${INK} stroke-width="3"/><path d="M4 38h76M4 60h76M28 18v60M55 18v60" stroke="#797775" stroke-width="3.500"/>`,
  svg`${R(2, 2, 80, 78, "w")}<path d="M4 4h76v12H4z" fill="#c8c6c4"/><path d="M55 18h25v60H4V59h51z" fill=${SKY}/><path d="M2 17h80" stroke=${INK} stroke-width="3"/><path d="M4 38h52M28 18v42M55 18v20" stroke="#797775" stroke-width="3.500"/><path d="M2 59h80M55 17v63M28 59v21M55 38h27M2 80h80V18" stroke=${BLUE} stroke-width="3.500"/>`,
  svg`<text x="14" y="68" font-size="68" font-weight="700" font-family="Open Sans" textLength="44" lengthAdjust="spacingAndGlyphs" fill="#1a86d0">R</text>`,
  svg`<text x="-3" y="56" font-size="68" font-weight="600" font-family="Open Sans" textLength="87" lengthAdjust="spacingAndGlyphs" fill="#1a86d0">Py</text>`,
  svg`${axis}<path d="M3 17h54" stroke="#1a86d0" stroke-width="4"/><circle cx="66" cy="17" r="9" fill=${SKY} stroke=${BLUE} stroke-width="4"/><path d="M3 38h40M3 58h22" stroke="#797775" stroke-width="4"/><circle cx="48" cy="38" r="5" stroke="#797775" stroke-width="4"/><circle cx="30" cy="58" r="5" stroke="#797775" stroke-width="4"/>`,
  svg`<path d="M30 38h22M42 10v56M42 11h10M42 66h10" stroke=${INK} stroke-width="4"/>${R(2, 28, 28, 20, "b")}${R(52, 2, 30, 20, "b")}${R(52, 28, 30, 20, "b")}${R(52, 55, 30, 20, "b")}`,
  svg`<path d="M2 8h80v50H38L20 78V58H2z" fill=${PAPER} stroke=${BLUE} stroke-width="4"/>`,
  svg`<path d="M12 14V2h40l22 20v57H12V40" fill=${PAPER} stroke=${INK} stroke-width="4"/><path d="M51 2v22h22" stroke=${INK} stroke-width="4"/><circle cx="15" cy="33" r="8" fill=${SKY} stroke=${BLUE} stroke-width="4"/><path d="M34 39h26M24 53h28" stroke="#2b88d8" stroke-width="3.500"/>`,
  svg`<path d="M8 0h42l22 20v62H8z" fill="#fff" stroke=${INK} stroke-width="4.500"/><path d="M47 0v22h24" stroke=${INK} stroke-width="4"/><path d="M18 48h11v28H18zM35 58h11v18H35zM52 38h11v38H52z" fill=${INK}/>`,
  svg`${R(6, 4, 76, 74, "b")}<path d="M10 50L34 8h24v14L40 40 32 72H10z" fill=${PAPER} stroke="#5ea3dc" stroke-width="3"/><path d="M-6-4h36v40L12 56-6 36z" fill="#f3f2f1"/><path d="M-2 0h26q4 14-2 32L12 44 0 32z" fill="#dd6f00"/><circle cx="11" cy="15" r="7" fill="#fff"/><circle cx="78" cy="48" r="11" fill="#f3f2f1"/><circle cx="72" cy="70" r="17" fill="#f3f2f1"/><circle cx="80" cy="48" r="7" fill="#dd6f00"/><circle cx="72" cy="70" r="12" fill="#dd6f00"/>`,
  svg`<g stroke="#8e2d9e" stroke-width="4" stroke-linejoin="round"><path d="M32 4h22l28 37-28 37H32L2 41z" fill="#fbf5fc"/><path d="M54 4L82 41 54 78 30 41zM32 4q-4 8 10 18M32 78q-4-8 10-18M42 22l26 38M68 22L42 60"/></g>`,
  svg`<g stroke="#0078d4" stroke-width="4"><path d="M2 8h52l28 30-28 34H2l26-32z" fill="#fff"/><path d="M2 8l28 31h40M54 8L5 70M70 22L28 70"/></g>`,
];

@customElement("pbi-viz")
class Viz extends LitElement {
  static styles = [base, css`
    :host { width: 272px; background: #f3f2f1; border-left: 1px solid #d8d6d4; height: 732px; display: flex; flex-direction: column; overflow: hidden; }
    .hd { display: flex; justify-content: space-between; align-items: center; padding: 0 12px 0 12px; margin-top: 14px; height: 30px; font-size: 22.500px; font-weight: 600; letter-spacing: -0.2px; }
    .sub { padding-left: 12px; font-size: 17px; font-weight: 600; letter-spacing: -0.25px; height: 24px; line-height: 24px; margin-top: 13px; }
    .modes { display: flex; gap: 57px; padding-left: 13px; margin-top: 4px; height: 55px; }
    .mode { width: 48px; height: 48px; border-radius: 3px; background: #d2d0ce; padding: 6px; }
    .mode2 { padding-top: 6px; }
    .gal { display: grid; grid-template-columns: repeat(6, 28px); gap: 14px; align-content: start; padding: 18.500px 0 0 17px; height: 315px; }
    .wells { border-top: 1px solid #d8d6d4; display: flex; flex: 1; margin-left: 1px; }
    .wl { width: 261px; padding-left: 6px; color: #323130; letter-spacing: -0.1px; font-size: 17px; }
    .lb { padding-left: 11px; height: 45px; padding-top: 13px; line-height: 24px; font-size: 16.500px; }
    .drop { height: 42px; border: 1.500px dashed #c8c6c4; background: #fff; border-radius: 3px; display: flex; align-items: center; padding-left: 15px; letter-spacing: 0.1px; padding-bottom: 1px; }
    .d2 { padding-left: 12px; height: 39px; letter-spacing: 0.22px; margin-top: 7px; }
    .b { font-weight: 600; color: #484644; font-size: 17px; padding-top: 15px; height: 46px; }
    .sw { display: flex; justify-content: space-between; align-items: center; padding-left: 11px; height: 40px; }
    .tg { width: 48px; height: 24px; border-radius: 12px; border: 1.300px solid #797775; background: #fff; display: flex; align-items: center; justify-content: center; gap: 3px; font-size: 14px; letter-spacing: -0.6px; color: #605e5c; }
    .on { background: #605e5c; color: #fff; }
    .kn { width: 12px; height: 12px; border-radius: 50%; background: #605e5c; }
    .on .kn { background: #fff; }
    .bar { width: 9px; height: 241px; border-radius: 5px; background: #d2d0ce; margin-top: 3px; }
  `];
  render() {
    return html`
      <div class="hd"><span>Visualizations</span>${dblChevron("r")}</div>
      <div class="sub">Build visual</div>
      <div class="modes">
        <div class="mode"><svg width="36" height="36"><path d="M0 1.500h29" stroke="#252423" stroke-width="2"/><path d="M1 9h34v10.500H1zM1 25.500h34V36H1z" fill="#f2c811" stroke="#252423" stroke-width="1.800" stroke-dasharray="3.500 1.500"/></svg></div>
        <div class="mode2"><svg width="38" height="38"><path d="M7 36H1V1h15l11.500 13.500M16 1v13h11" stroke="#252423" stroke-width="1.700"/><path d="M36 14.500c-2-1-10 7-16 14.500l3.500 3.500C29 25 37.500 16.500 36 14.500zM20 28.500c-6 0-3 7-11 7 5 2 14 1.500 14-3.500" stroke="#252423" stroke-width="1.600" fill="#fafafa"/></svg></div>
      </div>
      <svg width="271" height="14"><path d="M0 13.300h25l12-12 12 12h222" stroke="#979593" stroke-width="1.500"/></svg>
      <div class="gal">${gallery.map((g) => html`<svg width="28" height="28" viewBox="0 0 84 84">${g}</svg>`)}
        <svg width="28" height="28"><path d="M3.500 8.500H6V11H3.500zM12.500 8.500H15V11h-2.500zM21.500 8.500H24V11h-2.500z" fill="#252423"/></svg></div>
      <div class="wells">
        <div class="wl">
          <div class="lb">Values</div>
          <div class="drop">Add data fields here</div>
          <div class="lb b">Drill through</div>
          <div class="sw"><span>Cross-report</span><div class="tg"><i class="kn"></i>Off</div></div>
          <div class="sw"><span>Keep all filters</span><div class="tg on">On<i class="kn"></i></div></div>
          <div class="drop d2">Add drill-through fields here</div>
        </div>
        <div class="bar"></div>
      </div>`;
  }
}

/* ---------- fields ---------- */

@customElement("pbi-fields")
class Fields extends LitElement {
  static styles = [base, css`
    :host { flex: 1; background: #f3f2f1; border-left: 1px solid #d8d6d4; height: 732px; }
    .hd { display: flex; justify-content: space-between; align-items: center; padding: 0 11px 0 11px; margin-top: 14px; height: 30px; font-size: 22.500px; font-weight: 600; letter-spacing: -0.1px; }
    .search { margin: 24px 6px 0; height: 39px; border: 1px solid #605e5c; border-radius: 3px; background: #fff; display: flex; align-items: center; gap: 9px; padding-left: 11px; font-size: 19.500px; color: #484644; }
    .search span { padding-top: 3px; }
    .list { padding-top: 15px; }
    .row { height: 36px; display: flex; align-items: center; padding-left: 15px; font-size: 17px; color: #323130; }
    .row .ic { margin: 0 8px 0 8px; }
  `];
  render() {
    return html`<div class="hd"><span>Fields</span>${dblChevron("r")}</div>
      <div class="search">${magnifier(22, "#252423")}<span>Search</span></div>
      <div class="list">${["Cookie Sales", "Country Population"].map((t) => html`<div class="row">
        <svg width="10" height="17"><path d="M1 .5l8 8-8 8" stroke="#484644" stroke-width="1.300"/></svg>
        <svg class="ic" width="20" height="19"><path d="M.8.8h18.400v17H.8zM.8 4.500h18.400M.8 9h18.400M.8 13.500h18.400M7 4.500V18M13 4.500V18" stroke="#252423" stroke-width="1.500"/></svg>${t}</div>`)}</div>`;
  }
}

/* ---------- status bar ---------- */

@customElement("pbi-status")
class Status extends LitElement {
  static styles = [base, css`
    :host { height: 36px; background: #f3f2f1; border-top: 1px solid #d8d6d4; border-bottom: 1px solid #14101a; display: flex; align-items: center; padding-left: 7px; font-size: 17px; color: #484644; letter-spacing: 0.1px; }
    .zoom { margin-left: auto; display: flex; align-items: center; color: #605e5c; }
    .pct { margin: 0 37px 0 26px; width: 35px; font-size: 17px; letter-spacing: -0.5px; padding-bottom: 1px; }
    .fit { margin-right: 25px; margin-top: 2px; }
  `];
  render() {
    return html`<span>Page 1 of 1</span>
      <div class="zoom">
        <svg width="184" height="20" viewBox="1588 981 184 20"><path d="M1589 991.500h6.500M1761 990.500h11M1766.500 985v11" stroke="#605e5c" stroke-width="2"/><path d="M1603 991.500h150" stroke="#605e5c" stroke-width="2"/><path d="M1643 983.500h6v16h-6z" fill="#605e5c"/><path d="M1677.500 987.500v8" stroke="#605e5c"/></svg>
        <span class="pct">62%</span>
        <svg class="fit" width="25" height="18"><path d="M1 1h23v16H1z" stroke="#605e5c" stroke-width="1.600"/><path d="M4 7V4h4M17 4h4v3M21 11v3.500h-4M8 14.500H4V11" stroke="#605e5c" stroke-width="1.500"/></svg>
      </div>`;
  }
}

/* ---------- taskbar ---------- */

@customElement("win-taskbar")
class Taskbar extends LitElement {
  static styles = [base, css`
    :host {
      height: 72px; display: flex; align-items: center; color: #1b1a19;
      background: linear-gradient(90deg, #f0dbd0 0%, #ecd8e0 9%, #e8dadf 18%, #eeddc9 26%, #f0d9d2 34%, #e6dbe6 37%, #eedadc 41%, #e0dcdc 46%, #eadcd4 50%, #eddcca 55%, #ecdad0 59%, #e5dae6 63%, #d9dcea 68%, #e0dbe6 76%, #e6dce4 81%, #dcdce8 87%, #dedede 93%, #e8ded6 100%);
    }
    .wid { margin-left: 24px; width: 688px; padding-top: 2px; }
    .apps { display: flex; align-items: flex-start; height: 72px; }
    .app { width: 66px; height: 72px; padding-top: 20px; display: flex; flex-direction: column; gap: 6px; }
    .dot { width: 9px; height: 5px; border-radius: 3px; background: #857d78; margin-left: 14px; }
    .sel { width: 56px; height: 56px; margin-top: 9px; margin-left: -10px; padding: 10px 14px 0; border-radius: 5px; background: rgba(255,255,255,.55); box-shadow: 0 0 0 1px rgba(200,180,190,.45); }
    .ind { width: 24px; height: 5px; border-radius: 3px; background: #0078d4; margin-left: 2px; }
    .tray { margin-left: auto; display: flex; align-items: center; }
    .cloud { margin-left: 15px; }
    .lang { text-align: center; font-size: 16.500px; line-height: 23px; width: 78px; margin-right: 6px; letter-spacing: -0.1px; padding-top: 1px; }
    .sys { display: flex; gap: 12px; width: 100px; }
    .clock { text-align: right; font-size: 17px; line-height: 23px; width: 111px; letter-spacing: 0.12px; }
    .badge { width: 24px; height: 24px; border-radius: 50%; background: #0078d7; color: #fff; font-size: 14px; display: flex; align-items: center; justify-content: center; margin: 0 29px 0 18px; }
  `];
  render() {
    return html`
      <div class="wid"><svg width="36" height="34"><defs><linearGradient id="w" x2="1" y2="1"><stop stop-color="#4cc2f1"/><stop offset="1" stop-color="#0a6cc4"/></linearGradient></defs><rect width="36" height="34" rx="3" fill="#0f5ea8"/><rect x="3" y="3" width="14" height="28" rx="1.500" fill="#fff"/><rect x="19" y="3" width="14" height="13" rx="1.500" fill="url(#w)"/><rect x="19" y="18" width="14" height="13" rx="1.500" fill="#53c4f5"/></svg></div>
      <div class="apps">
        <div class="app"><svg width="35" height="35"><defs><linearGradient id="s" x2="1" y2="1"><stop stop-color="#4fd0ff"/><stop offset="1" stop-color="#0072d0"/></linearGradient></defs><path d="M0 2q0-2 2-2h14.500v16.800H0zM18 0h15q2 0 2 2v14.800H18zM0 18.500h16.500V35H2q-2 0-2-2zM18 18.500h17V33q0 2-2 2H18z" fill="url(#s)"/></svg></div>
        <div class="app"><svg width="35" height="35"><circle cx="19.500" cy="14.500" r="12.800" stroke="#2e2d2c" stroke-width="3.200" fill="#fff" fill-opacity=".3"/><path d="M10.500 24L3 32.500" stroke="#252423" stroke-width="4" stroke-linecap="round"/></svg></div>
        <div class="app"><svg width="36" height="35"><rect x="0" y="9.500" width="27" height="24.500" rx="1.500" fill="#2b2a29"/><rect x="9" y="0" width="27" height="24" rx="1.500" fill="#f7f7f7" fill-opacity=".95"/><path d="M9 9.500h18V24H9z" fill="#a3a2a1"/></svg></div>
        <div class="app"><svg width="35" height="35"><defs><linearGradient id="c" x1="0" y1="0" x2=".3" y2="1"><stop stop-color="#9463a6"/><stop offset=".5" stop-color="#6a62c4"/><stop offset="1" stop-color="#4d56c8"/></linearGradient></defs><path d="M17.500 0a17 17 0 1 1-7 32.500L0 34l2-9A17 17 0 0 1 17.500 0z" fill="url(#c)"/><rect x="8" y="10" width="14" height="14" rx="2.500" fill="#fff"/><path d="M23 15l4-3.500v11L23 19z" fill="#fff"/></svg></div>
        <div class="app"><svg width="35" height="35"><defs><linearGradient id="m" x2=".4" y2="1"><stop stop-color="#0a63b4"/><stop offset="1" stop-color="#21395f"/></linearGradient></defs><path d="M9 6V1.500h17V6" stroke="#35b3ef" stroke-width="2.200"/><path d="M0 4h35v27q0 4-4 4H4q-4 0-4-4z" fill="url(#m)"/><path d="M10 12h7v7h-7z" fill="#f25022"/><path d="M18 12h7v7h-7z" fill="#7fba00"/><path d="M10 20h7v7h-7z" fill="#00a4ef"/><path d="M18 20h7v7h-7z" fill="#ffb900"/></svg></div>
        <div class="app"><svg width="36" height="35"><path d="M0 1h12l3 3h21v10H0z" fill="#d99a12"/><path d="M0 7h13l3-3h20v30H0z" fill="#ffcc3d"/><path d="M6 34V26q0-3 3-3h18q3 0 3 3v8z" fill="#1273cc"/><path d="M10.500 28.500h14.500" stroke="#0a4f98" stroke-width="2"/></svg><div class="dot"></div></div>
        <div class="app"><svg width="36" height="36"><defs><linearGradient id="e" x2="1" y2=".4"><stop stop-color="#1590d8"/><stop offset=".6" stop-color="#2cc4c4"/><stop offset="1" stop-color="#63dc50"/></linearGradient></defs><path d="M0 18C1 4 10-1 19-1c11 0 17 8 17 15 0 6-4 9-9 9-4 0-6-2-5-4 3-6-3-8-7-8C7 11 2 15 0 18z" fill="url(#e)"/><path d="M0 18c3-5 8-7 14-7-5 3-6 17 4 20 6 2 12-1 16-4-4 7-10 9-16 9C7 36-1 28 0 18z" fill="#10569f"/><circle cx="8.500" cy="26.500" r="9" fill="#7a4a33"/><path d="M9 18q8 2 8.500 9t-6 8z" fill="#b9b4a6"/><path d="M4 20q5 4 2 14" stroke="#c79672" stroke-width="3"/></svg></div>
        <div class="app sel"><svg width="28" height="36"><defs><linearGradient id="p" x2="0" y2="1"><stop stop-color="#e6ad10"/><stop offset="1" stop-color="#c87e0e"/></linearGradient></defs><rect x="15" y="0" width="13" height="36" rx="1.500" fill="url(#p)"/><path d="M8 10.500q0-1.500 1.500-1.500h9q1.500 0 1.500 1.500V36H8z" fill="#eec02d"/><path d="M0 20q0-1.500 1.500-1.500h9.500q1.500 0 1.500 1.500v16H1.500Q0 36 0 34.500z" fill="#f8dc66"/></svg><div class="ind"></div></div>
      </div>
      <div class="tray">
        <svg width="18" height="10"><path d="M.5 9.500L9 1l8.500 8.500" stroke="#1b1a19" stroke-width="1.500"/></svg>
        <svg class="cloud" width="24" height="17"><path d="M6 16q-5.500 0-5.500-4.500T6 6.500Q8 1 13 1t6 5.500q4.500.5 4.500 5T19 16z" fill="#e8e8e8" stroke="#252423" stroke-width="1.500"/><path d="M2 9q2-3 4-2.500Q8 1.500 13 1.500t6 5q-4 0-9 4Q6 7 2 9z" fill="#8a8886"/></svg>
        <div class="lang">ENG<br/>IN</div>
        <div class="sys">
          <svg width="24" height="17"><path d="M.8 6.500q11.200-10 22.400 0M4.300 10q7.700-6.500 15.400 0M7.800 13q4.200-3.500 8.400 0" stroke="#1b1a19" stroke-width="1.600"/><circle cx="12" cy="14.800" r="2" fill="#1b1a19"/></svg>
          <svg width="24" height="18"><path d="M1 6h3.500L10 1v16l-5.500-5H1z" stroke="#1b1a19" stroke-width="1.500" stroke-linejoin="round"/><path d="M13 5.500q3 3.500 0 7M16 3q5 6 0 12" stroke="#1b1a19" stroke-width="1.500"/><path d="M19.500 1q6.500 8 0 16" stroke="#b5b3b6" stroke-width="1.500"/></svg>
          <svg width="24" height="17"><rect x=".8" y="1.800" width="19.500" height="14" rx="3" stroke="#1b1a19" stroke-width="1.500"/><rect x="3.500" y="4.500" width="10" height="8.600" rx="1" fill="#1b1a19"/><path d="M21 6.500h1q2 0 2 2t-2 2h-1z" fill="#1b1a19"/></svg>
        </div>
        <div class="clock">00:43<br/>05-09-2022</div>
        <div class="badge">1</div>
      </div>`;
  }
}

@customElement("app-root")
class AppRoot extends LitElement {
  static styles = [base, css`
    :host { width: 1920px; height: 1080px; overflow: hidden; display: flex; flex-direction: column; background: #f3f2f1; }
    .work { display: flex; height: 732px; }
    .center { display: flex; flex-direction: column; width: 1315px; }
    .top { display: flex; height: 680px; }
  `];
  render() {
    return html`<pbi-titlebar></pbi-titlebar><pbi-ribbon></pbi-ribbon>
      <div class="work"><pbi-nav></pbi-nav>
        <div class="center"><div class="top"><pbi-report></pbi-report><pbi-filters></pbi-filters></div><pbi-pagetabs></pbi-pagetabs></div>
        <pbi-viz></pbi-viz><pbi-fields></pbi-fields></div>
      <pbi-status></pbi-status><win-taskbar></win-taskbar>`;
  }
}
